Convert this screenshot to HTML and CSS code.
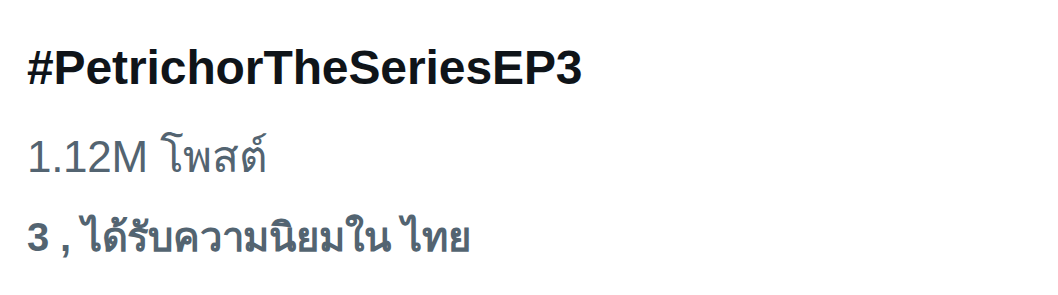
FILE: index.html
```html
<!DOCTYPE html>
<html lang="th">
<head>
<meta charset="utf-8">
<link rel="stylesheet" href="styles.css">
</head>
<body>
<div class="trend">
  <div class="title">#PetrichorTheSeriesEP3</div>
  <div class="count">1.12M โพสต์</div>
  <div class="rank">3 , ได้รับความนิยมใน ไทย</div>
</div>
</body>
</html>
```
FILE: styles.css
```css
html, body {
  margin: 0;
  padding: 0;
  background: #ffffff;
}
body {
  width: 1058px;
  height: 295px;
  overflow: hidden;
  font-family: "Liberation Sans", Arial, "Noto Sans", "DejaVu Sans", sans-serif;
}
.trend {
  display: flex;
  flex-direction: column;
  padding: 40px 0 0 27px;
}
.title {
  font-size: 48px;
  font-weight: 700;
  color: #0f1419;
  line-height: 56px;
  letter-spacing: -0.1px;
}
.count {
  font-size: 44px;
  color: #536471;
  line-height: 56px;
  margin-top: 33px;
  letter-spacing: -0.3px;
}
.rank {
  font-size: 40px;
  font-weight: 700;
  color: #536471;
  line-height: 50px;
  margin-top: 27px;
  letter-spacing: -0.2px;
}
```
